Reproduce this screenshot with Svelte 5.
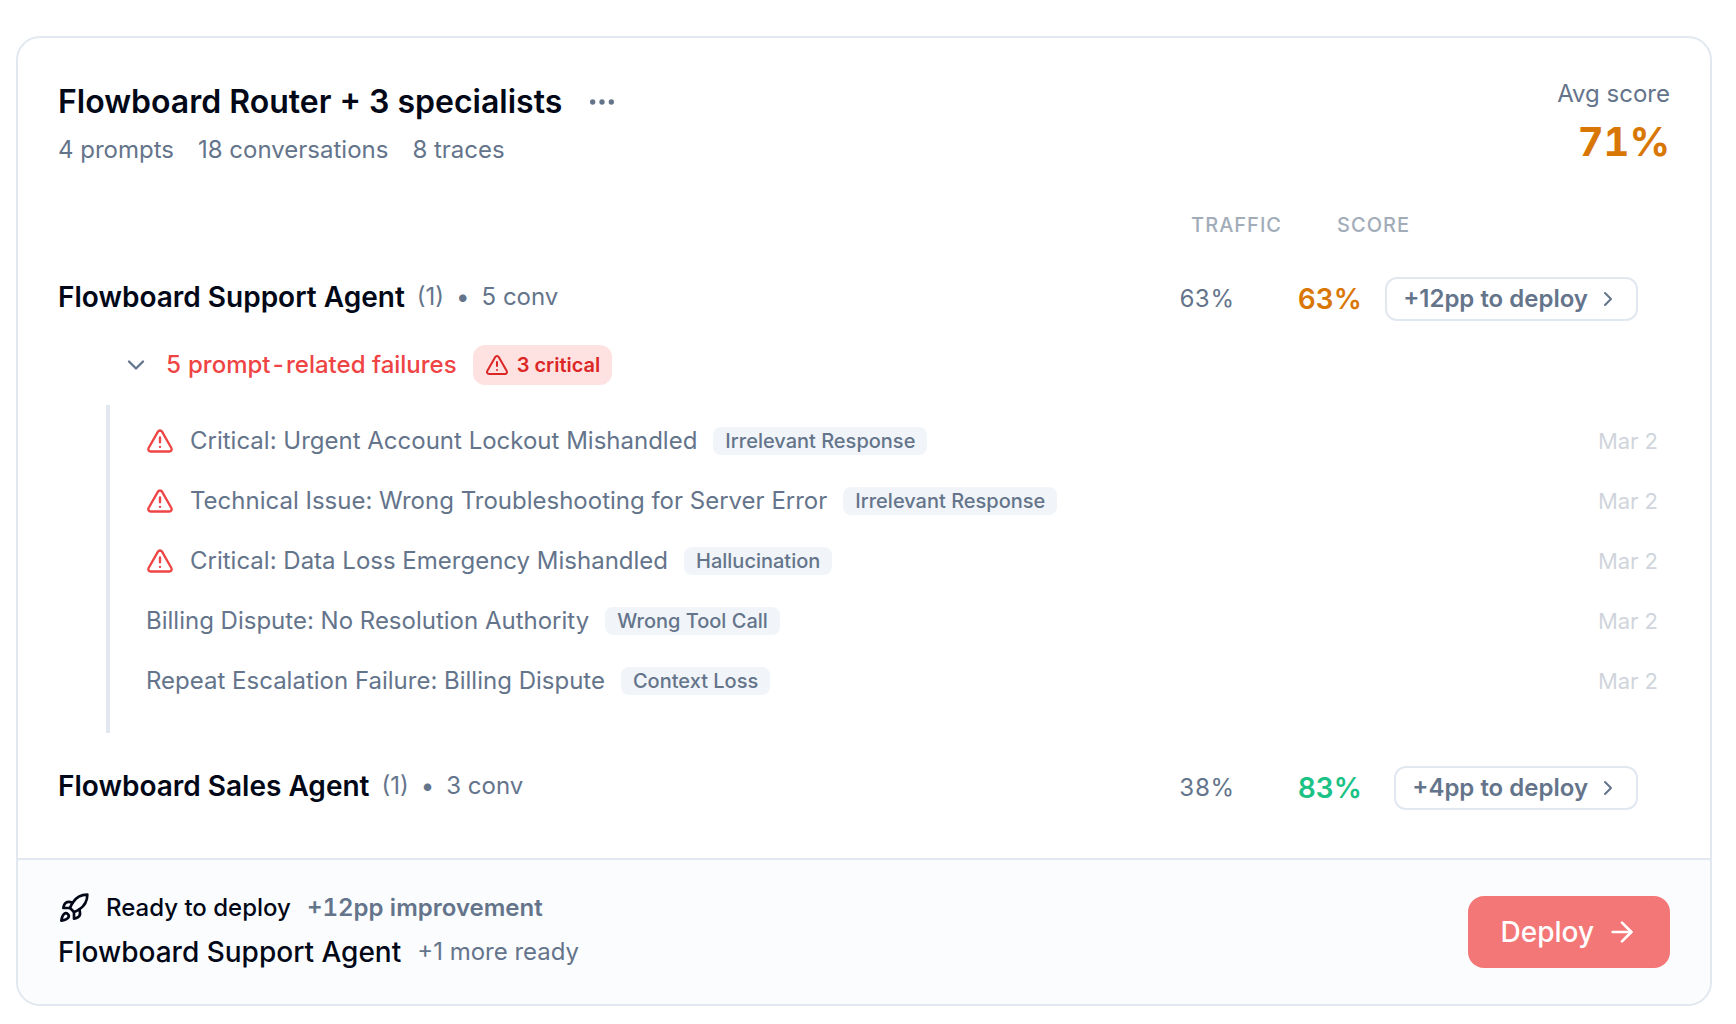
<script lang="ts">
type Failure = { title: string; tag: string; date: string; critical: boolean };
type Agent = {
    name: string;
    prompts: number;
    conversations: number;
    traffic: number;
    score: number;
    level: 'warn' | 'good';
    gain: number;
    failures: Failure[];
};
let expanded = $state(true);
const agents: Agent[] = [
    {
        name: 'Flowboard Support Agent',
        prompts: 1,
        conversations: 5,
        traffic: 63,
        score: 63,
        level: 'warn',
        gain: 12,
        failures: [
            { title: 'Critical: Urgent Account Lockout Mishandled', tag: 'Irrelevant Response', date: 'Mar 2', critical: true },
            { title: 'Technical Issue: Wrong Troubleshooting for Server Error', tag: 'Irrelevant Response', date: 'Mar 2', critical: true },
            { title: 'Critical: Data Loss Emergency Mishandled', tag: 'Hallucination', date: 'Mar 2', critical: true },
            { title: 'Billing Dispute: No Resolution Authority', tag: 'Wrong Tool Call', date: 'Mar 2', critical: false },
            { title: 'Repeat Escalation Failure: Billing Dispute', tag: 'Context Loss', date: 'Mar 2', critical: false }
        ]
    },
    {
        name: 'Flowboard Sales Agent',
        prompts: 1,
        conversations: 3,
        traffic: 38,
        score: 83,
        level: 'good',
        gain: 4,
        failures: []
    }
];
function criticalCount(failures: Failure[]) {
    return failures.filter(f => f.critical).length;
}
</script>

{#snippet warning()}
  <svg class="icon warning" viewBox="0 0 24 24" aria-hidden="true">
    <path d="m21.73 18-8-14a2 2 0 0 0-3.48 0l-8 14A2 2 0 0 0 4 21h16a2 2 0 0 0 1.73-3" />
    <path d="M12 9v4" />
    <path d="M12 17h.01" />
  </svg>
{/snippet}

<main class="card">
  <div class="body">
    <header class="header">
      <div>
        <div class="title-row">
          <h1>Flowboard Router + 3 specialists</h1>
          <button class="more" aria-label="More options">
            <svg class="icon large" viewBox="0 0 24 24" aria-hidden="true">
              <circle cx="5" cy="12" r="1" />
              <circle cx="12" cy="12" r="1" />
              <circle cx="19" cy="12" r="1" />
            </svg>
          </button>
        </div>
        <div class="stats">
          <span>4 prompts</span>
          <span>18 conversations</span>
          <span>8 traces</span>
        </div>
      </div>
      <div class="average">
        <div class="average-label">Avg score</div>
        <div class="average-value">71%</div>
      </div>
    </header>

    <div class="columns">
      <span>Traffic</span>
      <span>Score</span>
    </div>

    {#each agents as agent}
      <section class="agent">
        <div class="agent-row">
          <div class="agent-name">
            <h2>{agent.name}</h2>
            <span>({agent.prompts})</span>
            <span>•</span>
            <span>{agent.conversations} conv</span>
          </div>
          <div class="traffic">{agent.traffic}%</div>
          <div class="score {agent.level}">{agent.score}%</div>
          <div class="action">
            <button class="gain">
              +{agent.gain}pp to deploy
              <svg class="icon small" viewBox="0 0 24 24" aria-hidden="true"><path d="m9 18 6-6-6-6" /></svg>
            </button>
          </div>
        </div>

        {#if agent.failures.length}
          <button class="failures-toggle" aria-expanded={expanded} onclick={() => (expanded = !expanded)}>
            <svg class="icon chevron" class:closed={!expanded} viewBox="0 0 24 24" aria-hidden="true"><path d="m6 9 6 6 6-6" /></svg>
            <span class="failures-label">{agent.failures.length} prompt-related failures</span>
            <span class="critical-badge">
              {@render warning()}
              {criticalCount(agent.failures)} critical
            </span>
          </button>
          {#if expanded}
            <ul class="failures">
              {#each agent.failures as failure}
                <li>
                  {#if failure.critical}
                    {@render warning()}
                  {/if}
                  <span>{failure.title}</span>
                  <span class="tag">{failure.tag}</span>
                  <time>{failure.date}</time>
                </li>
              {/each}
            </ul>
          {/if}
        {/if}
      </section>
    {/each}
  </div>

  <footer class="footer">
    <div>
      <div class="ready">
        <svg class="icon large" viewBox="0 0 24 24" aria-hidden="true">
          <path d="M4.5 16.5c-1.5 1.26-2 5-2 5s3.74-.5 5-2c.71-.84.7-2.13-.09-2.91a2.18 2.18 0 0 0-2.91-.09z" />
          <path d="m12 15-3-3a22 22 0 0 1 2-3.95A12.88 12.88 0 0 1 22 2c0 2.72-.78 7.5-6 11a22.35 22.35 0 0 1-4 2z" />
          <path d="M9 12H4s.55-3.03 2-4c1.62-1.08 5 0 5 0" />
          <path d="M12 15v5s3.03-.55 4-2c1.08-1.62 0-5 0-5" />
        </svg>
        <span>Ready to deploy</span>
        <span class="improvement">+12pp improvement</span>
      </div>
      <div class="target">
        <span class="target-name">Flowboard Support Agent</span>
        <span>+1 more ready</span>
      </div>
    </div>
    <button class="deploy">
      Deploy
      <svg class="icon large" viewBox="0 0 24 24" aria-hidden="true">
        <path d="M5 12h14" />
        <path d="m12 5 7 7-7 7" />
      </svg>
    </button>
  </footer>
</main>

<style>
  :global(body) {
    margin: 0;
    background: #ffffff;
  }

  .card {
    margin: 36px 24px 18px 16px;
    border: 2px solid #e2e8f0;
    border-radius: 24px;
    background: #ffffff;
    color: #020817;
    font-family: Inter, 'Liberation Sans', sans-serif;
    font-size: 24px;
    line-height: 32px;
    overflow: hidden;
  }

  button {
    margin: 0;
    padding: 0;
    border: none;
    background: none;
    color: inherit;
    font: inherit;
    cursor: pointer;
  }

  h1,
  h2 {
    margin: 0;
  }

  .icon {
    flex: none;
    width: 28px;
    height: 28px;
    fill: none;
    stroke: currentColor;
    stroke-width: 2;
    stroke-linecap: round;
    stroke-linejoin: round;
  }

  .icon.large {
    width: 32px;
    height: 32px;
  }

  .icon.small {
    width: 24px;
    height: 24px;
  }

  .body {
    padding: 40px 40px 48px;
  }

  .header {
    display: flex;
    justify-content: space-between;
  }

  .title-row {
    display: flex;
    align-items: center;
    gap: 24px;
  }

  h1 {
    font-size: 32px;
    font-weight: 600;
    line-height: 48px;
  }

  .more {
    display: flex;
    color: #64748b;
  }

  .stats {
    display: flex;
    gap: 24px;
    margin-top: 8px;
    color: #64748b;
  }

  .average {
    text-align: right;
  }

  .average-label {
    color: #64748b;
  }

  .average-value {
    margin-top: 8px;
    color: #d97706;
    font-size: 40px;
    font-weight: 700;
    line-height: 48px;
    font-variant-numeric: tabular-nums;
  }

  .columns {
    display: flex;
    justify-content: flex-end;
    margin: 45px 0 38px;
    padding-right: 260px;
    color: #a2acb9;
    font-size: 20px;
    font-weight: 500;
    line-height: 28px;
    letter-spacing: 1px;
    text-transform: uppercase;
    text-align: right;
  }

  .columns span {
    width: 128px;
  }

  .agent + .agent {
    margin-top: 33px;
  }

  .agent-row {
    display: grid;
    grid-template-columns: 1fr 128px 128px 276px;
    align-items: center;
    padding-right: 32px;
  }

  .agent-name {
    display: flex;
    align-items: center;
    align-self: start;
    gap: 12px;
    color: #64748b;
  }

  h2 {
    color: #020817;
    font-size: 28px;
    font-weight: 600;
    line-height: 40px;
  }

  .traffic,
  .score {
    text-align: right;
    font-variant-numeric: tabular-nums;
  }

  .traffic {
    color: #64748b;
  }

  .score {
    font-size: 28px;
    font-weight: 600;
  }

  .score.warn {
    color: #d97706;
  }

  .score.good {
    color: #1bc286;
  }

  .action {
    display: flex;
    justify-content: flex-end;
  }

  .gain {
    display: flex;
    align-items: center;
    gap: 8px;
    padding: 4px 16px;
    border: 2px solid #e2e8f0;
    border-radius: 12px;
    color: #64748b;
    font-weight: 600;
  }

  .failures-toggle {
    display: flex;
    align-items: center;
    gap: 16px;
    margin: 24px 0 20px 64px;
  }

  .chevron {
    color: #64748b;
  }

  .chevron.closed {
    transform: rotate(-90deg);
  }

  .failures-label {
    color: #ef4444;
    font-weight: 500;
    font-variant-numeric: tabular-nums;
  }

  .critical-badge {
    display: flex;
    align-items: center;
    gap: 8px;
    padding: 6px 12px;
    border-radius: 12px;
    background: #fee2e2;
    color: #dc2626;
    font-size: 20px;
    font-weight: 600;
    line-height: 28px;
  }

  .critical-badge .warning {
    width: 24px;
    height: 24px;
  }

  .failures {
    margin: 0 0 0 48px;
    padding: 6px 12px 22px 36px;
    border-left: 4px solid #e2e8f0;
    color: #64748b;
    list-style: none;
  }

  .failures li {
    display: flex;
    align-items: center;
    gap: 16px;
    padding: 14px 0;
  }

  .failures .warning {
    color: #ef4444;
  }

  .tag {
    padding: 0 12px;
    border-radius: 8px;
    background: #f1f5f9;
    font-size: 20px;
    font-weight: 500;
    line-height: 28px;
  }

  time {
    margin-left: auto;
    color: #d0d5dc;
    font-size: 22px;
  }

  .footer {
    display: flex;
    align-items: center;
    justify-content: space-between;
    padding: 32px 40px;
    border-top: 2px solid #e2e8f0;
    background: #fbfcfe;
  }

  .ready {
    display: flex;
    align-items: center;
    gap: 16px;
    font-weight: 500;
  }

  .improvement {
    color: #64748b;
    font-weight: 600;
    font-variant-numeric: tabular-nums;
  }

  .target {
    display: flex;
    align-items: center;
    gap: 16px;
    margin-top: 8px;
    color: #64748b;
    line-height: 40px;
  }

  .target-name {
    color: #020817;
    font-size: 28px;
    font-weight: 500;
  }

  .deploy {
    display: flex;
    align-items: center;
    gap: 12px;
    padding: 16px 32px;
    border-radius: 16px;
    background: #f47777;
    color: #ffffff;
    font-size: 28px;
    font-weight: 500;
    line-height: 40px;
  }
</style>
